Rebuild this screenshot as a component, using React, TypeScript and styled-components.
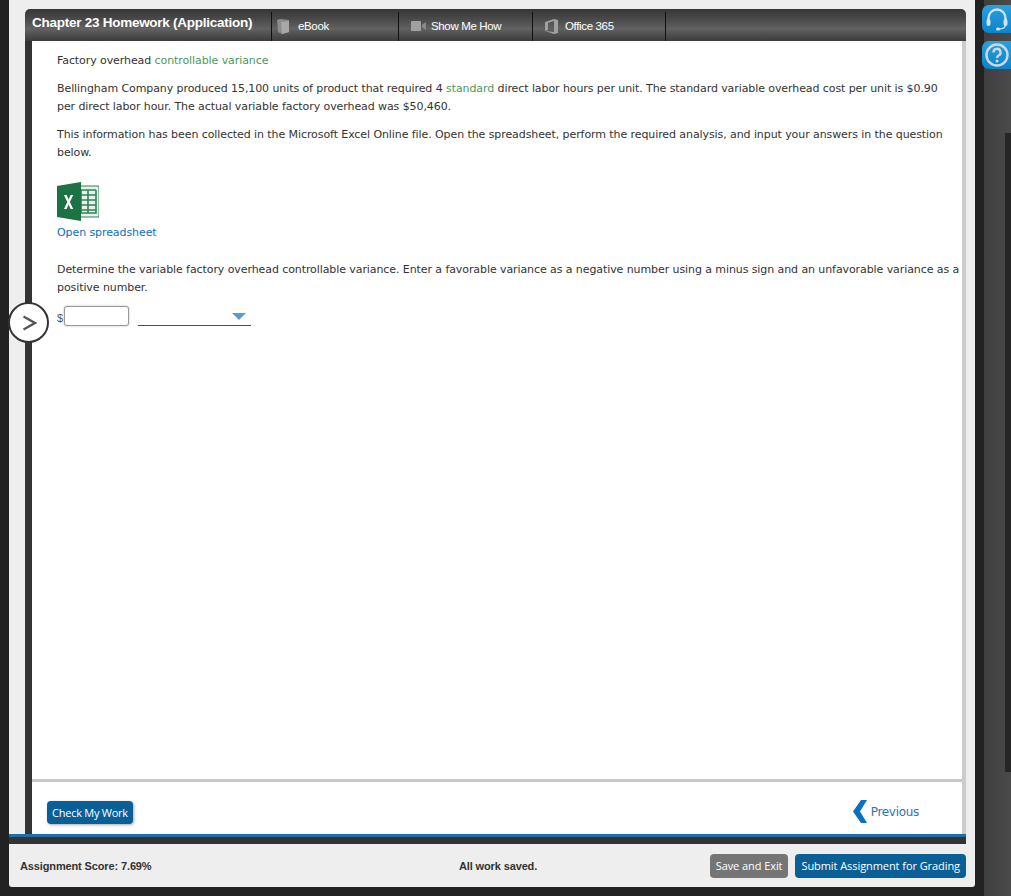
import React from 'react';
import styled, { createGlobalStyle } from 'styled-components';

const GlobalStyle = createGlobalStyle`
  html, body {
    margin: 0;
    padding: 0;
    height: 896px;
    overflow: hidden;
    background: #222;
  }
  * {
    box-sizing: border-box;
  }
`;

const Page = styled.div`
  display: flex;
  width: 1011px;
  height: 896px;
  padding-left: 9px;
  background: #222;
`;

const Shell = styled.div`
  position: relative;
  display: flex;
  flex-direction: column;
  width: 966px;
  height: 887px;
  background: #eee;
  border-radius: 0 0 3px 3px;
`;

const Assignment = styled.div`
  display: flex;
  flex-direction: column;
  flex: 1;
  padding: 9px 9px 0 16px;
`;

const Header = styled.header`
  display: flex;
  height: 32px;
  flex: none;
  border-radius: 5px 5px 0 0;
  background: linear-gradient(#363636 0%, #4c4c4c 35%, #626262 62%, #4a4a4a 85%, #3c3c3c 100%);
`;

const Title = styled.h1`
  width: 246px;
  margin: 0;
  padding: 5px 0 0 7px;
  font-family: 'Liberation Sans', Arial, sans-serif;
  font-size: 13.5px;
  line-height: 17px;
  font-weight: 700;
  letter-spacing: -0.26px;
  color: #fff;
  white-space: nowrap;
`;

const Tab = styled.div<{ $width: number; $left: number; $gap: number }>`
  display: flex;
  align-items: center;
  gap: ${(p) => p.$gap}px;
  width: ${(p) => p.$width}px;
  margin-top: 3px;
  padding: 0 0 1px ${(p) => p.$left}px;
  border-left: 1px solid #111;
  font-family: 'Liberation Sans', Arial, sans-serif;
  font-size: 11.5px;
  letter-spacing: -0.35px;
  color: #fff;
  white-space: nowrap;
`;

const LastTab = styled.div`
  flex: 1;
  margin-top: 3px;
  border-left: 1px solid #111;
`;

const Body = styled.div`
  display: flex;
  flex-direction: column;
  flex: 1;
  min-height: 0;
  border-left: 7px solid #333;
  border-right: 4px solid #ccc;
`;

const Question = styled.main`
  flex: 1;
  background: #fff;
  padding: 11px 2px 0 25px;
  font-family: 'DejaVu Sans', Verdana, sans-serif;
  font-size: 11px;
  line-height: 18px;
  letter-spacing: -0.085px;
  color: #333;
`;

const Para = styled.p<{ $gap?: number; $inset?: number }>`
  margin: 0 0 ${(p) => p.$gap ?? 10}px;
  padding-right: ${(p) => p.$inset ?? 0}px;
`;

const Term = styled.span`
  color: #4a9a5c;
`;

const SheetLink = styled.a`
  display: block;
  margin-bottom: 19px;
  color: #0b6fc2;
  text-decoration: none;
`;

const SheetIcon = styled.svg`
  display: block;
  margin: 20px 0 3px;
`;

const AnswerRow = styled.div`
  display: flex;
  align-items: flex-start;
  font-family: 'Liberation Sans', Arial, sans-serif;
`;

const Dollar = styled.span`
  margin-top: 3px;
  width: 7px;
  font-size: 11px;
  color: #555;
`;

const AmountInput = styled.input`
  width: 65px;
  height: 20px;
  margin: 0;
  border: 1px solid #999;
  border-radius: 3px;
  box-shadow: 0 0 2px #aaa;
  background: #fff;
`;

const Select = styled.div`
  position: relative;
  width: 113px;
  height: 20px;
  margin-left: 9px;
  border-bottom: 1px solid #1a5a8f;
`;

const Caret = styled.span`
  position: absolute;
  right: 5px;
  top: 7px;
  border-left: 7px solid transparent;
  border-right: 7px solid transparent;
  border-top: 7px solid #5b9bd0;
`;

const Toggle = styled.button`
  position: absolute;
  left: -1px;
  top: 302px;
  display: flex;
  align-items: center;
  justify-content: center;
  width: 41px;
  height: 41px;
  padding: 0;
  border: 2px solid #333;
  border-radius: 50%;
  background: #fff;
`;

const Actions = styled.footer`
  display: flex;
  flex: none;
  align-items: flex-start;
  justify-content: space-between;
  height: 55px;
  padding: 19px 43px 0 15px;
  background: #fff;
  border-top: 3px solid #c8c8c8;
`;

const CheckButton = styled.button`
  height: 23px;
  width: 86px;
  padding: 0;
  border: 0;
  border-radius: 4px;
  background: #0a5f97;
  box-shadow: 1px 1px 3px #aaa;
  font-family: 'Open Sans', sans-serif;
  font-size: 11px;
  letter-spacing: -0.25px;
  color: #fff;
`;

const PrevLink = styled.a`
  display: flex;
  align-items: center;
  gap: 4px;
  margin-top: -1px;
  font-family: 'DejaVu Sans', Verdana, sans-serif;
  font-size: 12px;
  letter-spacing: -0.3px;
  color: #2a74b8;
`;

const AccentBar = styled.div`
  flex: none;
  height: 3px;
  margin-left: -16px;
  background: #1f6ea8;
`;

const DarkBar = styled.div`
  flex: none;
  height: 7px;
  margin-left: -16px;
  background: #333;
`;

const StatusBar = styled.div`
  display: grid;
  grid-template-columns: 439px 1fr auto;
  align-items: center;
  height: 43px;
  flex: none;
  padding: 0 9px 0 11px;
  font-family: 'Liberation Sans', Arial, sans-serif;
  font-size: 11px;
  font-weight: 700;
  letter-spacing: -0.13px;
  color: #333;
`;

const ButtonGroup = styled.div`
  display: flex;
  gap: 7px;
`;

const FootButton = styled.button<{ $muted?: boolean }>`
  height: 24px;
  padding: 0 6px;
  border: 0;
  border-radius: 4px;
  background: ${(p) => (p.$muted ? '#757575' : '#0a5f97')};
  font-family: 'Open Sans', sans-serif;
  font-size: 11px;
  letter-spacing: -0.07px;
  color: #fff;
`;

const Rail = styled.aside`
  flex: 1;
  height: 896px;
  display: flex;
  flex-direction: column;
  gap: 8px;
  padding: 5px 0 0 7px;
  background: linear-gradient(90deg, #222 0, #222 9px, #3f3f3f 9px, #4a4a4a 100%);
`;

const RailButton = styled.div`
  display: flex;
  align-items: center;
  justify-content: flex-start;
  width: 29px;
  height: 28px;
  padding-left: 3px;
  border-radius: 7px 0 0 7px;
  background: linear-gradient(#2aa0e0, #0d83c9);
`;

const RailStrip = styled.div`
  align-self: flex-end;
  width: 6px;
  height: 639px;
  margin-top: 56px;
  background: #262626;
`;

const Icons = {
  Book: () => (
    <svg width="14" height="17" viewBox="0 0 14 17">
      <path d="M1 2 L4 1 L13 2 L13 14 L6 16 L2 14 Z" fill="#8c8c8c" />
      <path d="M5 4 L13 3 L13 14 L6 16 Z" fill="#a8a8a8" />
    </svg>
  ),
  Camera: () => (
    <svg width="15" height="10" viewBox="0 0 15 10">
      <rect width="10" height="10" rx="1" fill="#a0a0a0" />
      <path d="M11 4 L15 1 L15 9 L11 6 Z" fill="#8a8a8a" />
    </svg>
  ),
  Office: () => (
    <svg width="13" height="15" viewBox="0 0 13 15">
      <path d="M0 3 L9 0 L13 1 L13 14 L9 15 L0 12 L9 13 L9 2 L3 4 L3 11 L0 12 Z" fill="#a0a0a0" />
    </svg>
  ),
};

export default function App() {
  return (
    <>
      <GlobalStyle />
      <Page>
        <Shell>
          <Assignment>
            <Header>
              <Title>Chapter 23 Homework (Application)</Title>
              <Tab $width={127} $left={4} $gap={8}>
                <Icons.Book />
                eBook
              </Tab>
              <Tab $width={134} $left={12} $gap={5}>
                <Icons.Camera />
                Show Me How
              </Tab>
              <Tab $width={133} $left={12} $gap={7}>
                <Icons.Office />
                Office 365
              </Tab>
              <LastTab />
            </Header>
            <Body>
              <Question>
                <Para>
                  Factory overhead <Term>controllable variance</Term>
                </Para>
                <Para $inset={12}>
                  Bellingham Company produced 15,100 units of product that required 4{' '}
                  <Term>standard</Term> direct labor hours per unit. The standard variable overhead
                  cost per unit is $0.90 per direct labor hour. The actual variable factory overhead
                  was $50,460.
                </Para>
                <Para>
                  This information has been collected in the Microsoft Excel Online file. Open the
                  spreadsheet, perform the required analysis, and input your answers in the question
                  below.
                </Para>
                <SheetIcon width="42" height="39" viewBox="0 0 42 39">
                  <rect x="20" y="4" width="22" height="31" fill="#e8f0ea" stroke="#2f8258" />
                  <path
                    d="M24 8H39M24 13H39M24 18H39M24 23H39M24 28H39M24 8V31H39V8M31 8V31"
                    fill="none"
                    stroke="#2f8258"
                    strokeWidth="1.6"
                  />
                  <path d="M0 4 L24 0 L24 39 L0 35 Z" fill="#1d7245" />
                  <path
                    d="M7 13 H9.6 L11.6 17.6 L13.6 13 H16.2 L12.9 20 L16.2 27 H13.6 L11.6 22.4 L9.6 27 H7 L10.3 20 Z"
                    fill="#fff"
                  />
                </SheetIcon>
                <SheetLink>Open spreadsheet</SheetLink>
                <Para $gap={9}>
                  Determine the variable factory overhead controllable variance. Enter a favorable
                  variance as a negative number using a minus sign and an unfavorable variance as a
                  positive number.
                </Para>
                <AnswerRow>
                  <Dollar>$</Dollar>
                  <AmountInput />
                  <Select>
                    <Caret />
                  </Select>
                </AnswerRow>
              </Question>
              <Actions>
                <CheckButton>Check My Work</CheckButton>
                <PrevLink>
                  <svg width="14" height="23" viewBox="0 0 14 23">
                    <path d="M8 0 H14 L7 11.5 L14 23 H8 L0 11.5 Z" fill="#0b6fc2" />
                  </svg>
                  Previous
                </PrevLink>
              </Actions>
            </Body>
            <AccentBar />
            <DarkBar />
          </Assignment>
          <StatusBar>
            <span>Assignment Score: 7.69%</span>
            <span>All work saved.</span>
            <ButtonGroup>
              <FootButton $muted>Save and Exit</FootButton>
              <FootButton>Submit Assignment for Grading</FootButton>
            </ButtonGroup>
          </StatusBar>
          <Toggle aria-label="Expand">
            <svg width="16" height="16" viewBox="0 0 16 16">
              <path d="M2.5 1.5 L14 8 L2.5 14.5" fill="none" stroke="#555" strokeWidth="2.2" />
            </svg>
          </Toggle>
        </Shell>
        <Rail>
          <RailButton>
            <svg width="24" height="24" viewBox="0 0 24 24" fill="none" stroke="#cfe4f2">
              <path d="M3.5 14 V11 A8.5 8.5 0 0 1 20.5 11 V14" strokeWidth="2.4" />
              <rect x="1.5" y="12" width="4" height="7" rx="2" fill="#cfe4f2" stroke="none" />
              <rect x="18.5" y="12" width="4" height="7" rx="2" fill="#cfe4f2" stroke="none" />
              <path d="M20.5 18 Q20 22 14 22" strokeWidth="1.4" />
              <rect x="11" y="20.5" width="4" height="3" rx="1.5" fill="#cfe4f2" stroke="none" />
            </svg>
          </RailButton>
          <RailButton>
            <svg width="24" height="24" viewBox="0 0 24 24">
              <circle cx="12" cy="12" r="10.5" fill="none" stroke="#cfd9df" strokeWidth="2.4" />
              <path
                d="M8.5 9.5 A3.5 3.5 0 1 1 13.5 12.5 C12.4 13.2 12 13.6 12 15"
                fill="none"
                stroke="#cfd9df"
                strokeWidth="2.4"
              />
              <circle cx="12" cy="18" r="1.5" fill="#cfd9df" />
            </svg>
          </RailButton>
          <RailStrip />
        </Rail>
      </Page>
    </>
  );
}
